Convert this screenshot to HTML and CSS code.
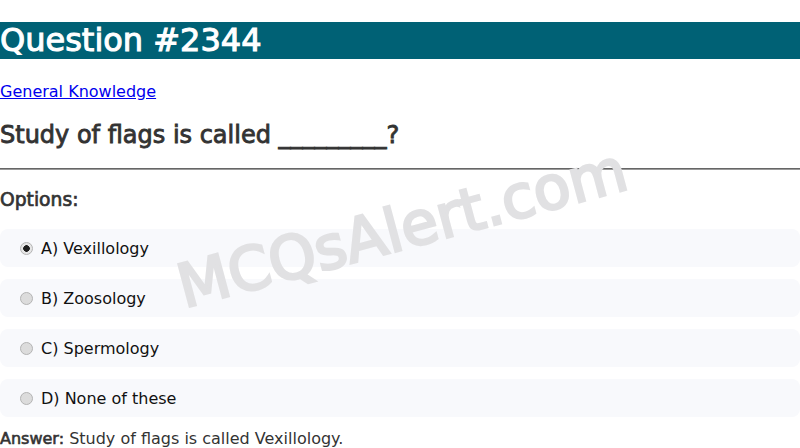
FILE: index.html
```html
<!DOCTYPE html>
<html>
<head>
<meta charset="utf-8">
<link rel="stylesheet" href="styles.css">
</head>
<body>
<div class="page">
  <h1 class="title">Question #2344</h1>
  <p class="category"><a href="#">General Knowledge</a></p>
  <h2 class="question">Study of flags is called _________?</h2>
  <hr class="rule">
  <h3 class="options-label">Options:</h3>
  <div class="options">
    <label class="option"><input type="radio" name="q" checked> A) Vexillology</label>
    <label class="option"><input type="radio" name="q"> B) Zoosology</label>
    <label class="option"><input type="radio" name="q"> C) Spermology</label>
    <label class="option"><input type="radio" name="q"> D) None of these</label>
  </div>
  <p class="answer"><strong class="answer-label">Answer:</strong> Study of flags is called Vexillology.</p>
  <div class="watermark">MCQsAlert.com</div>
</div>
</body>
</html>
```
FILE: styles.css
```css
html, body {
  margin: 0;
  padding: 0;
  background: #fff;
}
body {
  font-family: "DejaVu Sans", sans-serif;
  color: #333;
  overflow: hidden;
}
.page {
  position: relative;
}
.title {
  font-size: 32px;
  font-weight: normal;
  -webkit-text-stroke: 1.05px #fff;
  margin: 21.5px 0 23.5px;
  background: #006175;
  color: #fff;
  line-height: 37px;
}
.category {
  margin: 16px 0;
  font-size: 16px;
  line-height: 19px;
}
.category a {
  color: #0000ee;
}
.question {
  font-size: 24px;
  font-weight: normal;
  -webkit-text-stroke: 0.85px #333;
  margin: 20px 0 19px;
  line-height: 28px;
  color: #333;
}
.rule {
  border: 0;
  border-top: 1px solid #666;
  border-bottom: 1px solid #9a9a9a;
  margin: 0;
}
.options-label {
  font-size: 18.72px;
  font-weight: normal;
  -webkit-text-stroke: 0.7px #333;
  line-height: 22px;
  margin: 18.5px 0;
}
.options {
  display: flex;
  flex-direction: column;
  gap: 12px;
}
.option {
  display: flex;
  align-items: center;
  background: #f8f9fc;
  border-radius: 8px;
  height: 38px;
  box-sizing: border-box;
  padding: 0 15px 0 20px;
  font-size: 16px;
  color: #111;
}
.option input {
  -webkit-appearance: none;
  appearance: none;
  width: 13px;
  height: 13px;
  margin: 0 8px 0 0;
  border: 1px solid #b4b4b4;
  border-radius: 50%;
  background: #dcdcdc;
  box-sizing: border-box;
  flex: none;
}
.option input:checked {
  background: radial-gradient(circle, #1e1e1e 0 3px, #e6e6e6 3.6px);
}
.answer {
  margin: 12px 0;
  font-size: 16px;
  line-height: 19px;
  color: #333;
}
.answer-label {
  font-weight: normal;
  -webkit-text-stroke: 0.6px #333;
}
.watermark {
  position: absolute;
  left: 402px;
  top: 206px;
  transform: translate(-50%, -50%) rotate(-15deg);
  font-size: 60px;
  font-weight: normal;
  -webkit-text-stroke: 2.6px #e1e1e3;
  color: #e1e1e3;
  white-space: nowrap;
  pointer-events: none;
}
```
